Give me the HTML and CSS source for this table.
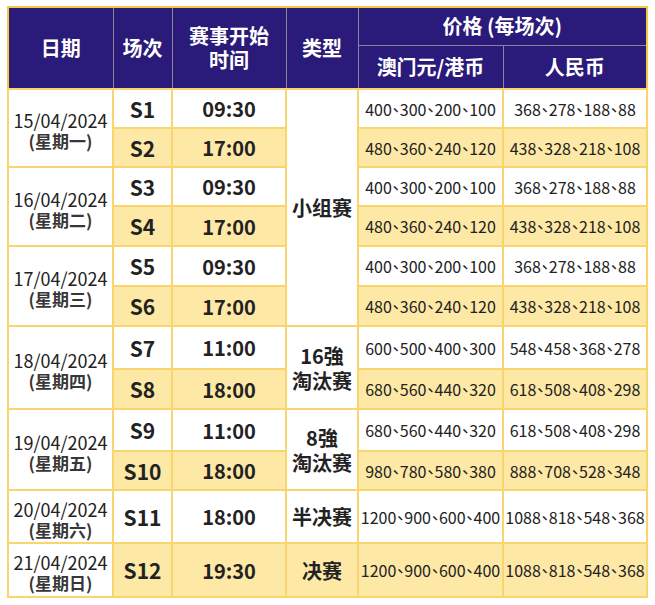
FILE: index.html
```html
<!DOCTYPE html>
<html lang="zh">
<head>
<meta charset="utf-8">
<link rel="stylesheet" href="styles.css">
</head>
<body>
<table class="sched">
  <colgroup>
    <col class="c-date"><col class="c-sess"><col class="c-time"><col class="c-type"><col class="c-mop"><col class="c-rmb">
  </colgroup>
  <thead>
    <tr class="h1">
      <th rowspan="2">日期</th>
      <th rowspan="2">场次</th>
      <th rowspan="2">赛事开始<br>时间</th>
      <th rowspan="2">类型</th>
      <th colspan="2">价格 (每场次)</th>
    </tr>
    <tr class="h2">
      <th>澳门元/港币</th>
      <th>人民币</th>
    </tr>
  </thead>
  <tbody>
    <tr class="r39">
      <td rowspan="2" class="date"><span class="d">15/04/2024</span><span class="w">(星期一)</span></td>
      <td class="sess">S1</td><td class="time">09:30</td>
      <td rowspan="6" class="type">小组赛</td>
      <td class="price">400、300、200、100</td><td class="price">368、278、188、88</td>
    </tr>
    <tr class="y r39">
      <td class="sess">S2</td><td class="time">17:00</td>
      <td class="price">480、360、240、120</td><td class="price">438、328、218、108</td>
    </tr>
    <tr class="r39">
      <td rowspan="2" class="date"><span class="d">16/04/2024</span><span class="w">(星期二)</span></td>
      <td class="sess">S3</td><td class="time">09:30</td>
      <td class="price">400、300、200、100</td><td class="price">368、278、188、88</td>
    </tr>
    <tr class="y r40">
      <td class="sess">S4</td><td class="time">17:00</td>
      <td class="price">480、360、240、120</td><td class="price">438、328、218、108</td>
    </tr>
    <tr class="r40">
      <td rowspan="2" class="date"><span class="d">17/04/2024</span><span class="w">(星期三)</span></td>
      <td class="sess">S5</td><td class="time">09:30</td>
      <td class="price">400、300、200、100</td><td class="price">368、278、188、88</td>
    </tr>
    <tr class="y r40">
      <td class="sess">S6</td><td class="time">17:00</td>
      <td class="price">480、360、240、120</td><td class="price">438、328、218、108</td>
    </tr>
    <tr class="r43">
      <td rowspan="2" class="date"><span class="d">18/04/2024</span><span class="w">(星期四)</span></td>
      <td class="sess">S7</td><td class="time">11:00</td>
      <td rowspan="2" class="type">16強<br>淘汰赛</td>
      <td class="price">600、500、400、300</td><td class="price">548、458、368、278</td>
    </tr>
    <tr class="y r40">
      <td class="sess">S8</td><td class="time">18:00</td>
      <td class="price">680、560、440、320</td><td class="price">618、508、408、298</td>
    </tr>
    <tr class="r42">
      <td rowspan="2" class="date"><span class="d">19/04/2024</span><span class="w">(星期五)</span></td>
      <td class="sess">S9</td><td class="time">11:00</td>
      <td rowspan="2" class="type">8強<br>淘汰赛</td>
      <td class="price">680、560、440、320</td><td class="price">618、508、408、298</td>
    </tr>
    <tr class="y r39">
      <td class="sess">S10</td><td class="time">18:00</td>
      <td class="price">980、780、580、380</td><td class="price">888、708、528、348</td>
    </tr>
    <tr class="r53">
      <td class="date"><span class="d">20/04/2024</span><span class="w">(星期六)</span></td>
      <td class="sess">S11</td><td class="time">18:00</td>
      <td class="type">半决赛</td>
      <td class="price">1200、900、600、400</td><td class="price">1088、818、548、368</td>
    </tr>
    <tr class="y r54">
      <td class="date"><span class="d">21/04/2024</span><span class="w">(星期日)</span></td>
      <td class="sess">S12</td><td class="time">19:30</td>
      <td class="type">决赛</td>
      <td class="price">1200、900、600、400</td><td class="price">1088、818、548、368</td>
    </tr>
  </tbody>
</table>
</body>
</html>
```

FILE: styles.css
```css
html, body {
  margin: 0;
  padding: 0;
  background: #ffffff;
}
body {
  padding: 6px 0 0 7px;
  font-family: "Noto Sans CJK SC", "Noto Sans", sans-serif;
}
.sched {
  border-collapse: collapse;
  table-layout: fixed;
  width: 639px;
  border: 2px solid #f5c843;
}
.c-date { width: 105px; }
.c-sess { width: 59px; }
.c-time { width: 114px; }
.c-type { width: 72px; }
.c-mop { width: 145px; }
.c-rmb { width: 144px; }

.sched th {
  background: #2a1a7a;
  color: #ffffff;
  font-size: 20px;
  font-weight: 700;
  line-height: 24px;
  padding: 0;
  border: 1.5px solid #8f8196;
  text-align: center;
  vertical-align: middle;
}
.sched thead tr:first-child th { border-top: 2px solid #f5c843; }
.h1 { height: 38px; }
.h2 { height: 44px; }

.sched td {
  padding: 0;
  border: 2px solid #f9d56e;
  text-align: center;
  vertical-align: middle;
  background: #ffffff;
  color: #222222;
}
.sched tr.y td { background: #fde8a6; }
.sched tr.y td.date { background: #ffffff; }

.r39 { height: 39px; }
.r40 { height: 40px; }
.r42 { height: 42px; }
.r43 { height: 43px; }
.r53 { height: 53px; }
.r54 { height: 54px; }

.date {
  color: #2d2672;
}
.date .d {
  display: block;
  font-size: 18px;
  line-height: 22px;
  padding-top: 4px;
}
.date .w {
  display: block;
  font-size: 17px;
  font-weight: 700;
  line-height: 20px;
  opacity: 0.9;
}
.sess {
  font-size: 21px;
  font-weight: 700;
  color: #222222;
}
.time {
  font-size: 20px;
  font-weight: 700;
  color: #222222;
}
.type {
  color: #2d2672;
  font-size: 20px;
  font-weight: 700;
  line-height: 25px;
}
.price {
  font-family: "Noto Sans CJK TC", "Noto Sans", sans-serif;
  font-size: 16px;
  font-feature-settings: "halt";
  white-space: nowrap;
  color: #222222;
}
```
